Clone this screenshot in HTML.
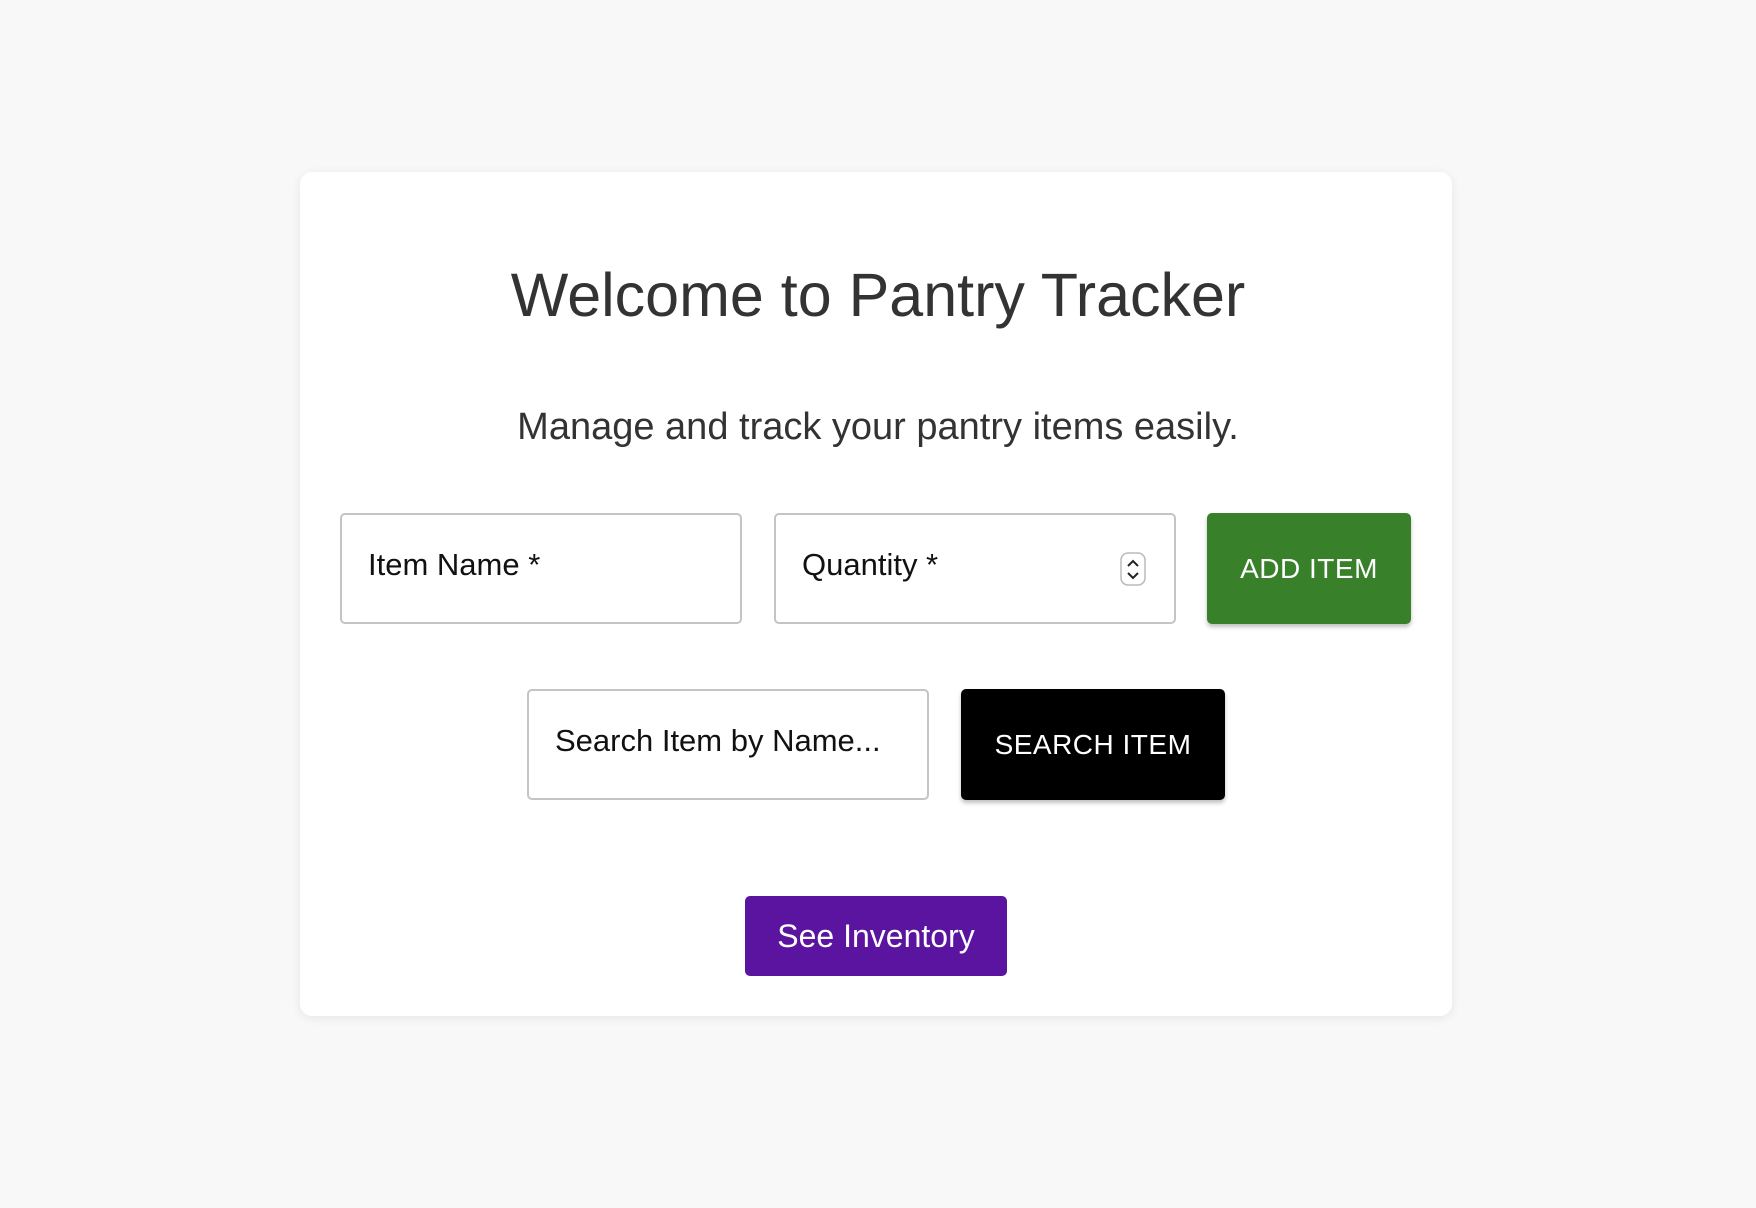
<!DOCTYPE html>
<html><head><meta charset="utf-8"><style>
html,body{margin:0;padding:0;}
body{width:1756px;height:1208px;background:#f8f8f8;font-family:"Liberation Sans",Arial,sans-serif;position:relative;overflow:hidden;}
.card{position:absolute;left:300px;top:172px;width:1152px;height:844px;background:#fff;border-radius:12px;box-shadow:0 2px 10px rgba(0,0,0,0.08);}
.abs{position:absolute;box-sizing:border-box;}
h1{position:absolute;left:0;width:1756px;top:259px;margin:0;text-align:center;font-weight:400;font-size:61px;color:#333;line-height:72px;}
.sub{position:absolute;left:0;width:1756px;top:404px;text-align:center;font-size:38px;color:#333;line-height:46px;}
.inp{border:2px solid #c4c4c4;border-radius:5px;background:#fff;font-size:31px;color:#111;padding-left:26px;line-height:100px;}
.btn{border-radius:5px;color:#fff;font-size:28px;text-align:center;box-shadow:0 3px 4px rgba(0,0,0,0.25);letter-spacing:0.5px;}
</style></head><body>
<div class="card"></div>
<h1>Welcome to Pantry Tracker</h1>
<div class="sub">Manage and track your pantry items easily.</div>
<div class="abs inp" style="left:340px;top:513px;width:402px;height:111px;">Item Name *</div>
<div class="abs inp" style="left:774px;top:513px;width:402px;height:111px;">Quantity *
<svg style="position:absolute;left:344px;top:37px" width="26" height="34" viewBox="0 0 26 34"><rect x="1" y="1" width="24" height="32" rx="7" fill="#fff" stroke="#bbb" stroke-width="1.5"/><path d="M8 14 L13 9 L18 14 M8 21 L13 26 L18 21" fill="none" stroke="#222" stroke-width="2"/></svg></div>
<div class="abs btn" style="left:1207px;top:513px;width:204px;height:111px;line-height:111px;background:#38802a;">ADD ITEM</div>
<div class="abs inp" style="left:527px;top:689px;width:402px;height:111px;">Search Item by Name...</div>
<div class="abs btn" style="left:961px;top:689px;width:264px;height:111px;line-height:111px;background:#000;">SEARCH ITEM</div>
<div class="abs" style="left:745px;top:896px;width:262px;height:80px;line-height:80px;background:#5a14a0;color:#fff;border-radius:5px;text-align:center;font-size:32px;">See Inventory</div>
</body></html>
